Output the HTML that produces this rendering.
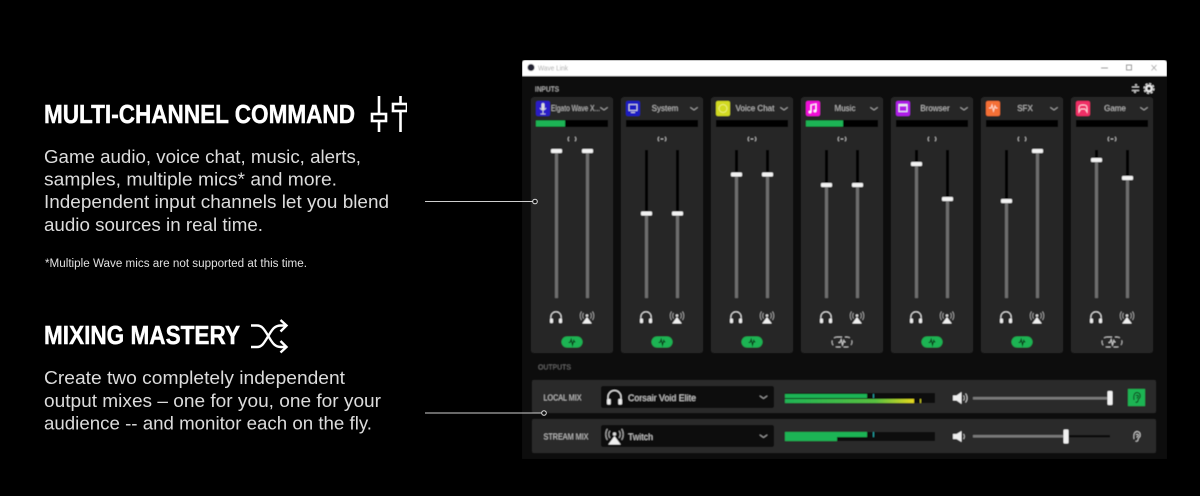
<!DOCTYPE html>
<html lang="en"><head><meta charset="utf-8"><title>Wave Link</title>
<style>
html,body{margin:0;padding:0;background:#000;width:1200px;height:496px;overflow:hidden}
svg{display:block}
text{font-family:"Liberation Sans",sans-serif}
.b{fill:#dcdcdc;font-size:18px}
.h{fill:#fff;font-size:26px;font-weight:700;stroke:#fff;stroke-width:.45}
.l{fill:#bdbdbd;font-size:8px;text-anchor:middle}
.ch{fill:none;stroke:#aaa;stroke-width:.8;stroke-linecap:round;stroke-linejoin:round}
</style></head><body>
<svg xmlns="http://www.w3.org/2000/svg" width="1200" height="496" viewBox="0 0 1200 496">
<defs>
<filter id="bl" x="0" y="0" width="100%" height="100%"><feGaussianBlur stdDeviation="0.45"/></filter>
<filter id="bt" x="0" y="0" width="100%" height="100%"><feGaussianBlur stdDeviation="0.3"/></filter>
<g id="hp"><path d="M-5.200 3V0A5.200 5.200 0 0 1 5.200 0V3" fill="none" stroke="#e4e4e4" stroke-width="1"/><rect x="-6" y="1.500" width="3" height="4.600" rx="1" fill="#eee"/><rect x="3" y="1.500" width="3" height="4.600" rx="1" fill="#eee"/></g>
<g id="bc"><path d="M0 0L4.800 6.500H-4.800Z" fill="#f0f0f0"/><circle cy="-1.500" r="1.300" fill="#ddd"/><path d="M-3.500 -4A5 5 0 0 0 -3.500 1.500M3.500 -4A5 5 0 0 1 3.500 1.500M-5.500 -5.500A8 8 0 0 0 -5.500 3M5.500 -5.500A8 8 0 0 1 5.500 3" fill="none" stroke="#aaa" stroke-width=".8"/></g>
<g id="pg"><rect x="-10.500" y="-5.500" width="21" height="11" rx="5.500" fill="#1db452"/><path d="M-3.500 0.500H-2L-.8 -2.500L.5 3L1.800 -1.500L2.600 0H3.500" fill="none" stroke="#0b3a1c" stroke-width="1.100"/></g>
<g id="po"><rect x="-10" y="-5" width="20" height="10" rx="5" fill="none" stroke="#bbb" stroke-width=".9" stroke-dasharray="5 3"/><path d="M-3.500 0.500H-2L-.8 -2.500L.5 3L1.800 -1.500L2.600 0H3.500" fill="none" stroke="#ccc" stroke-width="1"/></g>
<g id="lk"><path d="M-3 -2.200A3 3 0 0 0 -3 2.200M3 -2.200A3 3 0 0 1 3 2.200" fill="none" stroke="#bbb" stroke-width=".9"/></g>
<g id="lm"><path d="M-3 -2.200A3 3 0 0 0 -3 2.200M3 -2.200A3 3 0 0 1 3 2.200M-1.300 0H1.300" fill="none" stroke="#bbb" stroke-width=".9"/></g>
<g id="ch"><rect x="0" y="97" width="82" height="256" rx="3" fill="#282828"/><rect x="5" y="120" width="72" height="7" fill="#000"/><path d="M69.500 107.500L73 110L76.500 107.500" class="ch"/></g>
<g id="ic"><use href="#hp" x="25" y="317"/><use href="#bc" x="56" y="317"/></g>
</defs>
<rect width="1200" height="496" fill="#000"/>

<g filter="url(#bt)">
<text class="h" x="44" y="123" textLength="311" lengthAdjust="spacingAndGlyphs">MULTI-CHANNEL COMMAND</text>
<g stroke="#fff" stroke-width="2.600" fill="none">
<path d="M379 96V113M379 122V132M400.500 96V103M400.500 112V132"/>
<rect x="372" y="114" width="14" height="7"/>
<rect x="393" y="104" width="14" height="7"/>
</g>
<text class="b" x="44" y="163" textLength="317" lengthAdjust="spacingAndGlyphs">Game audio, voice chat, music, alerts,</text>
<text class="b" x="44" y="185.500" textLength="293" lengthAdjust="spacingAndGlyphs">samples, multiple mics* and more.</text>
<text class="b" x="44" y="208" textLength="345" lengthAdjust="spacingAndGlyphs">Independent input channels let you blend</text>
<text class="b" x="44" y="231" textLength="219" lengthAdjust="spacingAndGlyphs">audio sources in real time.</text>
<text x="45" y="267" fill="#e0e0e0" font-size="11.500" textLength="262" lengthAdjust="spacingAndGlyphs">*Multiple Wave mics are not supported at this time.</text>

<text class="h" x="44" y="344" textLength="196" lengthAdjust="spacingAndGlyphs">MIXING MASTERY</text>
<g stroke="#fff" stroke-width="2.400" fill="none">
<path d="M251 325.500H257C262 325.500 264 329 268 335.500C272 342 274 347 281 347H286"/>
<path d="M251 347H257C262 347 264 343 268 336.500C272 330 274 325.500 281 325.500H286"/>
<path d="M280.500 320L286.500 325.500L280.500 331.500M280.500 341L286.500 347L280.500 352.500"/>
</g>
<text class="b" x="44" y="384" textLength="301" lengthAdjust="spacingAndGlyphs">Create two completely independent</text>
<text class="b" x="44" y="407" textLength="337" lengthAdjust="spacingAndGlyphs">output mixes – one for you, one for your</text>
<text class="b" x="44" y="429.500" textLength="328" lengthAdjust="spacingAndGlyphs">audience -- and monitor each on the fly.</text>
</g>

<g filter="url(#bl)">
<rect x="522" y="76" width="645" height="383" fill="#101010"/>
<path d="M522 76V63Q522 60 525 60H1164Q1167 60 1167 63V76Z" fill="#fff"/>
<circle cx="531" cy="67.500" r="3.500" fill="#223"/>
<text x="538" y="70.500" fill="#aaa" font-size="7.500" textLength="30" lengthAdjust="spacingAndGlyphs">Wave Link</text>
<path d="M1101 68H1108" stroke="#888" fill="none"/>
<rect x="1126.500" y="65" width="5" height="5" fill="none" stroke="#888"/>
<path d="M1151.500 65L1156.500 70.500M1156.500 65L1151.500 70.500" stroke="#999" fill="none" stroke-width=".8"/>
<text x="535" y="91.500" fill="#bbb" font-size="7" textLength="24" lengthAdjust="spacingAndGlyphs">INPUTS</text>
<path d="M1132 87H1139M1132 90.500H1139" stroke="#ccc"/><circle cx="1136" cy="85" r="1" fill="#ccc"/><circle cx="1135" cy="92" r="1" fill="#ccc"/>
<circle cx="1149" cy="88.500" r="2.800" fill="none" stroke="#eee" stroke-width="2.200"/>
<circle cx="1149" cy="88.500" r="4.800" fill="none" stroke="#eee" stroke-width="1.200" stroke-dasharray="2 1.770"/>

<g transform="translate(531 0)"><use href="#ch"/>
<rect x="5" y="101" width="14" height="15" rx="2" fill="#2a1fc8"/><rect x="10.500" y="103" width="3" height="7" rx="1.500" fill="#ddd"/><path d="M9 108Q12 112 15 108M12 110V114M9.500 114H14.500" stroke="#ddd" fill="none" stroke-width=".8"/>
<text x="20" y="111" fill="#bdbdbd" font-size="8" textLength="49" lengthAdjust="spacingAndGlyphs">Elgato Wave X...</text>
<rect x="5" y="120.500" width="29" height="6" fill="#1fb455"/>
<use href="#lk" x="41" y="139"/>
<rect x="24" y="150" width="3" height="148" fill="#6e6e6e"/><rect x="55" y="150" width="3" height="148" fill="#6e6e6e"/>
<rect x="20" y="149" width="11" height="4" rx="1" fill="#f2f2f2"/><rect x="51" y="149" width="11" height="4" rx="1" fill="#f2f2f2"/>
<use href="#ic"/><use href="#pg" x="41" y="342"/></g>

<g transform="translate(621 0)"><use href="#ch"/>
<rect x="5" y="101" width="14" height="15" rx="2" fill="#1e1ec4"/><rect x="8" y="104.500" width="8" height="6" fill="none" stroke="#ccd" stroke-width="1"/><path d="M10 112.500H14" stroke="#ccd"/>
<text class="l" x="44" y="111">System</text>
<use href="#lm" x="41" y="139"/>
<rect x="24" y="150" width="3" height="63" fill="#000"/><rect x="24" y="213" width="3" height="85" fill="#6e6e6e"/>
<rect x="55" y="150" width="3" height="63" fill="#000"/><rect x="55" y="213" width="3" height="85" fill="#6e6e6e"/>
<rect x="20" y="211.500" width="11" height="4" rx="1" fill="#f2f2f2"/><rect x="51" y="211.500" width="11" height="4" rx="1" fill="#f2f2f2"/>
<use href="#ic"/><use href="#pg" x="41" y="342"/></g>

<g transform="translate(711 0)"><use href="#ch"/>
<rect x="5" y="101" width="14" height="15" rx="2" fill="#d2da20"/><circle cx="12" cy="108.500" r="4" fill="none" stroke="#eef07a" stroke-width="1"/>
<text class="l" x="44" y="111">Voice Chat</text>
<use href="#lm" x="41" y="139"/>
<rect x="24" y="150" width="3" height="24" fill="#000"/><rect x="24" y="174" width="3" height="124" fill="#6e6e6e"/>
<rect x="55" y="150" width="3" height="24" fill="#000"/><rect x="55" y="174" width="3" height="124" fill="#6e6e6e"/>
<rect x="20" y="172.500" width="11" height="4" rx="1" fill="#f2f2f2"/><rect x="51" y="172.500" width="11" height="4" rx="1" fill="#f2f2f2"/>
<use href="#ic"/><use href="#pg" x="41" y="342"/></g>

<g transform="translate(801 0)"><use href="#ch"/>
<rect x="5" y="101" width="14" height="15" rx="2" fill="#f010d8"/><path d="M10 112V105L15 104V111" fill="none" stroke="#fff" stroke-width="1"/><circle cx="9" cy="112" r="1.400" fill="#fff"/><circle cx="14" cy="111" r="1.400" fill="#fff"/>
<text class="l" x="44" y="111">Music</text>
<rect x="5" y="120.500" width="37" height="6" fill="#1fb455"/>
<use href="#lm" x="41" y="139"/>
<rect x="24" y="150" width="3" height="35" fill="#000"/><rect x="24" y="185" width="3" height="113" fill="#6e6e6e"/>
<rect x="55" y="150" width="3" height="35" fill="#000"/><rect x="55" y="185" width="3" height="113" fill="#6e6e6e"/>
<rect x="20" y="183" width="11" height="4" rx="1" fill="#f2f2f2"/><rect x="51" y="183" width="11" height="4" rx="1" fill="#f2f2f2"/>
<use href="#ic"/><use href="#po" x="41" y="342"/></g>

<g transform="translate(891 0)"><use href="#ch"/>
<rect x="5" y="101" width="14" height="15" rx="2" fill="#b01fe8"/><rect x="8" y="104.500" width="8" height="7" fill="none" stroke="#eee" stroke-width="1"/><path d="M8 105.500H16" stroke="#eee" stroke-width="1.500"/>
<text class="l" x="44" y="111">Browser</text>
<use href="#lk" x="41" y="139"/>
<rect x="24" y="150" width="3" height="14" fill="#000"/><rect x="24" y="164" width="3" height="134" fill="#6e6e6e"/>
<rect x="55" y="150" width="3" height="49" fill="#000"/><rect x="55" y="199" width="3" height="99" fill="#6e6e6e"/>
<rect x="20" y="162" width="11" height="4" rx="1" fill="#f2f2f2"/><rect x="51" y="197" width="11" height="4" rx="1" fill="#f2f2f2"/>
<use href="#ic"/><use href="#pg" x="41" y="342"/></g>

<g transform="translate(981 0)"><use href="#ch"/>
<rect x="5" y="101" width="14" height="15" rx="2" fill="#f56f36"/><path d="M8 108H10L11 105L12.500 111L14 106L15 108H16.500" fill="none" stroke="#ffd9c8" stroke-width="1"/>
<text class="l" x="44" y="111">SFX</text>
<use href="#lk" x="41" y="139"/>
<rect x="24" y="150" width="3" height="51" fill="#000"/><rect x="24" y="201" width="3" height="97" fill="#6e6e6e"/>
<rect x="55" y="150" width="3" height="148" fill="#6e6e6e"/>
<rect x="20" y="199" width="11" height="4" rx="1" fill="#f2f2f2"/><rect x="51" y="149" width="11" height="4" rx="1" fill="#f2f2f2"/>
<use href="#ic"/><use href="#pg" x="41" y="342"/></g>

<g transform="translate(1071 0)"><use href="#ch"/>
<rect x="5" y="101" width="14" height="15" rx="2" fill="#f02e66"/><path d="M8 112V108Q8 105 11 105H13Q16 105 16 108V112L14 109H10Z" fill="none" stroke="#ffd0dc" stroke-width="1"/>
<text class="l" x="44" y="111">Game</text>
<use href="#lm" x="41" y="139"/>
<rect x="24" y="150" width="3" height="10" fill="#000"/><rect x="24" y="160" width="3" height="138" fill="#6e6e6e"/>
<rect x="55" y="150" width="3" height="28" fill="#000"/><rect x="55" y="178" width="3" height="120" fill="#6e6e6e"/>
<rect x="20" y="158" width="11" height="4" rx="1" fill="#f2f2f2"/><rect x="51" y="176" width="11" height="4" rx="1" fill="#f2f2f2"/>
<use href="#ic"/><use href="#po" x="41" y="342"/></g>

<text x="538" y="369.500" fill="#6a6a6a" font-size="7.500" textLength="33" lengthAdjust="spacingAndGlyphs">OUTPUTS</text>
<rect x="532" y="380" width="624" height="33" rx="2" fill="#2a2a2a"/>
<rect x="532" y="419" width="624" height="34" rx="2" fill="#2a2a2a"/>
<text x="543.500" y="400.500" fill="#c8c8c8" font-size="8.500" textLength="38" lengthAdjust="spacingAndGlyphs">LOCAL MIX</text>
<text x="543.500" y="439.500" fill="#c8c8c8" font-size="8.500" textLength="45" lengthAdjust="spacingAndGlyphs">STREAM MIX</text>
<rect x="601" y="386" width="173" height="22" rx="2" fill="#101010"/>
<rect x="601" y="425" width="173" height="22" rx="2" fill="#101010"/>
<use href="#hp" transform="translate(614.500 397) scale(1.250)"/>
<use href="#bc" transform="translate(614.500 436) scale(1.300)"/>
<text x="628" y="401" fill="#d0d0d0" font-size="9" textLength="68" lengthAdjust="spacingAndGlyphs">Corsair Void Elite</text>
<text x="628" y="440" fill="#d0d0d0" font-size="9" textLength="25" lengthAdjust="spacingAndGlyphs">Twitch</text>
<path d="M760 396L763.500 398.500L767 396M760 435L763.500 437.500L767 435" class="ch"/>

<rect x="785" y="393" width="150" height="10" fill="#101010"/>
<rect x="785" y="394" width="82" height="4" fill="#1fb455"/>
<linearGradient id="gy" x1="0" x2="1" y1="0" y2="0"><stop offset="0" stop-color="#1fb455"/><stop offset=".7" stop-color="#58c040"/><stop offset="1" stop-color="#e6d81e"/></linearGradient>
<rect x="785" y="399" width="129" height="4" fill="url(#gy)"/>
<rect x="873" y="394" width="1" height="4" fill="#2aa"/><rect x="920" y="399" width="1" height="4" fill="#cc2"/>
<rect x="785" y="432" width="150" height="9" fill="#101010"/>
<rect x="785" y="432" width="82" height="5" fill="#1fb455"/><rect x="785" y="437" width="52" height="4" fill="#1fb455"/>
<rect x="873" y="432" width="1" height="5" fill="#2aa"/>

<g fill="#eee"><path d="M953 395.500H956.500L961.500 392V404L956.500 400.500H953Z"/><path d="M953 434H956.500L961.500 431V442L956.500 439H953Z"/></g>
<path d="M963.500 395.500A4 4 0 0 1 963.500 400.500M965.500 393.500A7 7 0 0 1 965.500 402.500M963.500 434A4 4 0 0 1 963.500 439" fill="none" stroke="#ccc" stroke-width=".9"/>
<rect x="973" y="397" width="137" height="2.500" fill="#7a7a7a"/>
<rect x="1107.500" y="391" width="5" height="14" rx="1" fill="#f2f2f2"/>
<rect x="973" y="435" width="93" height="2.500" fill="#7a7a7a"/><rect x="1066" y="435" width="44" height="2.500" fill="#0c0c0c"/>
<rect x="1063.500" y="429.500" width="5" height="14" rx="1" fill="#f2f2f2"/>
<rect x="1128" y="389" width="17" height="17" fill="#1db452"/>
<path d="M1134 400Q1133 393 1137 392.500Q1141 393 1140 397.500Q1138 399 1138 401Q1137 403 1135.500 402M1136 396Q1137 394.500 1138.500 396Q1138 398 1136.500 398" fill="none" stroke="#0b3a1c" stroke-width="1"/>
<path d="M1134 439Q1133 432 1137 431.500Q1141 432 1140 436.500Q1138 438 1138 440Q1137 442 1135.500 441M1136 435Q1137 433.500 1138.500 435Q1138 437 1136.500 437" fill="none" stroke="#ccc" stroke-width=".9"/>
</g>

<path d="M425 201.500H532.500M425 413H541.500" stroke="#cfcfcf" stroke-width="1.100" fill="none"/>
<circle cx="535" cy="201.500" r="2.300" fill="#111" stroke="#ddd" stroke-width="1"/>
<circle cx="544" cy="413" r="2.300" fill="#111" stroke="#ddd" stroke-width="1"/>
</svg>
</body></html>
